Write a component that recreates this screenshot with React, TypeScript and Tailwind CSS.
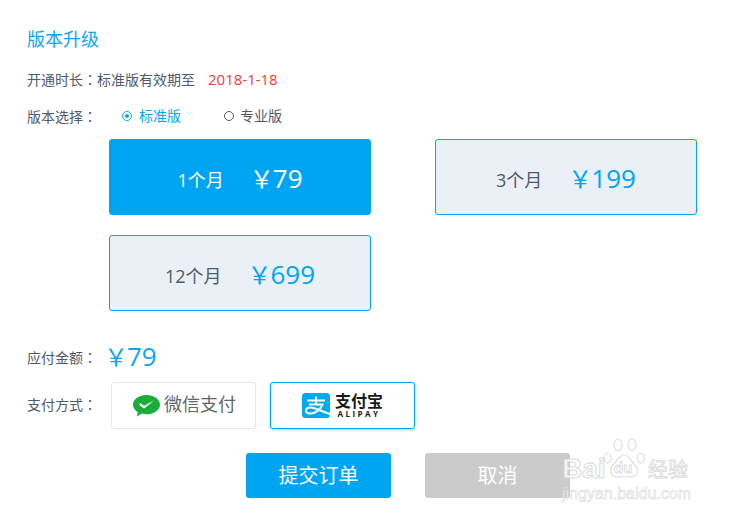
const font = "font-['Open_Sans','Noto_Sans_CJK_SC',sans-serif]";
const colon = "font-['Noto_Sans_CJK_TC',sans-serif]";

function Price({ value }: { value: string }) {
  return (
    <span className="inline-block translate-y-[1px] text-[24px] leading-none">
      ￥<span className="-ml-[1px] text-[26px] leading-none">{value}</span>
    </span>
  );
}

function Card({ months, price, active }: { months: string; price: string; active?: boolean }) {
  return (
    <div
      className={
        "flex h-[76px] w-[262px] items-center justify-center gap-[26px] rounded-[3px] border border-[#00a5f2] pt-[3px] " +
        (active ? "bg-[#00a5f2] text-white" : "bg-[#ebf0f7] text-[#4f5a6b]")
      }
    >
      <span className="translate-y-[1px] text-[18px] leading-none">{months}</span>
      <span className={active ? "text-white" : "text-[#00a5f2]"}>
        <Price value={price} />
      </span>
    </div>
  );
}

function WeChatIcon() {
  return (
    <svg width="27" height="22" viewBox="0 0 27 22">
      <path d="M13.500 0C6 0 0 4.300 0 9.700c0 3 1.900 5.700 4.800 7.500L3.900 21.500l5-2.900c1.500.4 3 .7 4.600.7 7.500 0 13.500-4.300 13.500-9.600S21 0 13.500 0z" fill="#1aad3a" />
      <path d="M6 9.500l1.600-1.200 3.600 2.400 9.800-5.200-9.200 7.600c-.6.400-1.200.3-1.600-.2z" fill="#fff" />
    </svg>
  );
}

function AlipayIcon() {
  return (
    <svg width="28" height="25" viewBox="0 0 28 25">
      <rect width="28" height="25" rx="3.500" fill="#00aaee" />
      <path d="M5 7.500h18M14 3.500v7M7 11.500h13.500c-1.500 5-7.500 9-12 9-3 0-4.500-1.300-4.500-3 0-2 2-3.300 5-3 4 .3 9 3.200 19 6.500" fill="none" stroke="#fff" strokeWidth="2" />
    </svg>
  );
}

export default function App() {
  return (
    <div className={"relative h-[517px] w-[731px] overflow-hidden bg-white pl-[27px] pt-[28px] text-[#4f5a6b] " + font}>
      <h1 className="h-[22px] text-[18px] leading-[22px] font-normal text-[#0ea5f0]">版本升级</h1>

      <div className="mt-[19px] flex h-[20px] items-center text-[14px] leading-[20px]">
        <span>开通时长<span className={colon}>：</span>标准版有效期至</span>
        <span className="ml-[13px] text-[15px] text-[#ee3b3b]">2018-1-18</span>
      </div>

      <div className="mt-[17px] flex h-[20px] items-center text-[14px] leading-[20px]">
        <span className="w-[95px]">版本选择<span className={colon}>：</span></span>
        <span className="flex w-[102px] items-center text-[#0ea5f0]">
          <span className="mr-[7px] flex h-[10px] w-[10px] items-center justify-center rounded-full border border-[#0ea5f0]">
            <span className="h-[4px] w-[4px] rounded-full bg-[#0ea5f0]" />
          </span>
          标准版
        </span>
        <span className="flex items-center">
          <span className="mr-[6px] h-[10px] w-[10px] rounded-full border border-[#4f5a6b]" />
          专业版
        </span>
      </div>

      <div className="mt-[13px] ml-[82px] grid grid-cols-[262px_262px] gap-x-[64px] gap-y-[20px]">
        <Card months="1个月" price="79" active />
        <Card months="3个月" price="199" />
        <Card months="12个月" price="699" />
      </div>

      <div className="mt-[29px] flex h-[32px] items-center text-[14px]">
        <span className="w-[77px] pt-[2px]">应付金额<span className={colon}>：</span></span>
        <span className="text-[#0ea5f0]">
          <Price value="79" />
        </span>
      </div>

      <div className="mt-[10px] flex items-center text-[14px]">
        <span className="w-[84px] -translate-y-[1px]">支付方式<span className={colon}>：</span></span>
        <div className="flex gap-[14px]">
          <div className="flex h-[47px] w-[145px] items-center justify-center gap-[4px] rounded-[3px] border border-[#e6e6e6] pl-[2px] text-[18px] text-[#666]">
            <WeChatIcon />
            <span className="-translate-y-[1px]">微信支付</span>
          </div>
          <div className="flex h-[47px] w-[145px] items-center justify-center gap-[5px] rounded-[3px] border border-[#00a5f2] shadow-[0_1px_3px_rgba(0,165,242,0.45)]">
            <AlipayIcon />
            <div className="flex flex-col items-center text-[#1a1a1a]">
              <span className="text-[16px] leading-[16px] font-bold">支付宝</span>
              <span className="text-[8px] leading-[9px] font-bold tracking-[2.500px]">ALIPAY</span>
            </div>
          </div>
        </div>
      </div>

      <div className="mt-[24px] ml-[219px] flex gap-[34px] text-[20px] text-white">
        <div className="flex h-[45px] w-[145px] items-center justify-center rounded-[3px] bg-[#00a5f2]">提交订单</div>
        <div className="flex h-[45px] w-[145px] items-center justify-center rounded-[3px] bg-[#cbcbcb]">取消</div>
      </div>

      <div className="pointer-events-none absolute left-[562px] top-[438px] h-[64px] w-[130px] opacity-80">
        <svg width="44" height="42" viewBox="0 0 44 42" className="absolute left-[41px] top-0">
          <g fill="#ffffff" fillOpacity="0.4" stroke="#d6d6d6" strokeWidth="1.200">
            <ellipse cx="4.500" cy="20" rx="3.500" ry="5" />
            <ellipse cx="15" cy="7" rx="4" ry="6" />
            <ellipse cx="29" cy="7" rx="4" ry="6" />
            <ellipse cx="38" cy="20" rx="3.500" ry="5" />
            <path d="M21 17c-5 0-7 6-11 10-4 4-3 11 3 12 3 .5 5-1 8-1s5 1.500 8 1c6-1 7-8 3-12-4-4-6-10-11-10z" />
          </g>
        </svg>
        <div className="absolute left-0 top-[17px] font-['Liberation_Sans',sans-serif] text-[28px] leading-[28px] font-bold text-white [-webkit-text-stroke:1px_#d2d2d2]">Bai</div>
        <div className="absolute left-[52px] top-[20px] font-['Liberation_Sans',sans-serif] text-[15px] leading-[20px] font-bold text-white [-webkit-text-stroke:0.8px_#d2d2d2]">du</div>
        <div className="absolute left-[86px] top-[17px] font-['Noto_Sans_CJK_SC',sans-serif] text-[20px] leading-[28px] text-white [-webkit-text-stroke:0.8px_#d2d2d2]">经验</div>
        <div className="absolute left-0 top-[47px] font-['Liberation_Sans',sans-serif] text-[16px] leading-[17px] text-white [-webkit-text-stroke:0.6px_#d2d2d2]">jingyan.baidu.com</div>
      </div>
    </div>
  );
}
